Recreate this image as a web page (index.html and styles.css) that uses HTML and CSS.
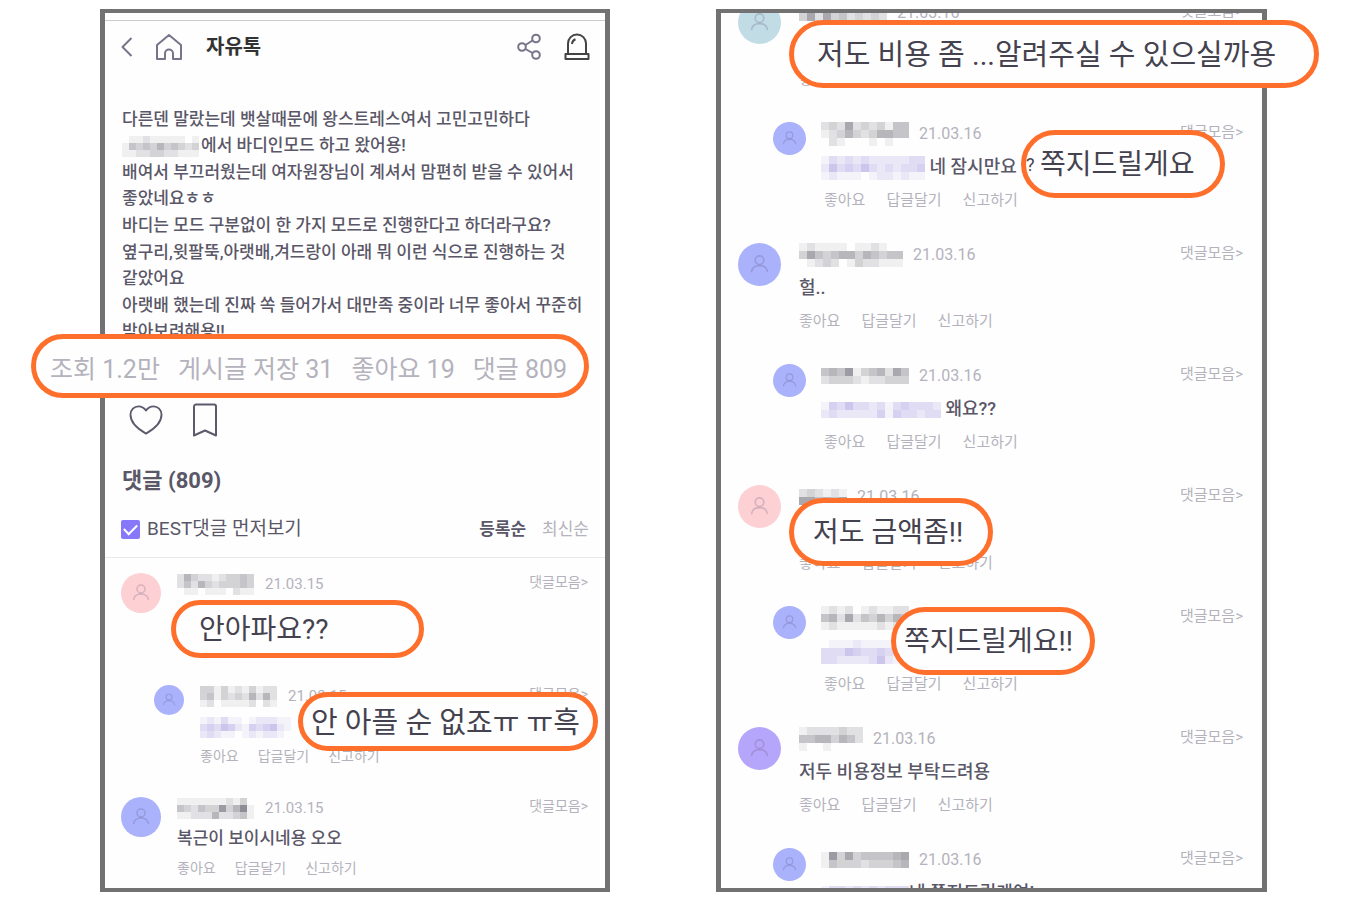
FILE: index.html
```html
<!DOCTYPE html>
<html lang="ko">
<head>
  <meta charset="UTF-8">
  <meta name="viewport" content="width=device-width, initial-scale=1.0">
  <title>자유톡</title>
  <link rel="stylesheet" href="styles.css">
</head>
<body>
  <svg class="defs" aria-hidden="true">
    <symbol id="person" viewBox="0 0 40 40">
      <circle cx="20" cy="16" r="4"/>
      <path d="M12.500 27c.6-4.200 3.500-6 7.500-6s6.900 1.800 7.500 6"/>
    </symbol>
  </svg>
  <main class="shots">
    <section class="shot shot-post">
      <div class="screen">
        <header class="topbar">
          <button class="icon-btn" aria-label="뒤로"><svg width="12" height="20" viewBox="0 0 12 20"><path d="M10.500 1 1.500 10l9 9"/></svg></button>
          <button class="icon-btn home" aria-label="홈"><svg width="28" height="28" viewBox="0 0 28 28"><path d="M2 12 14 2l12 10v14h-8v-5.500a4 4 0 0 0-8 0V26H2z"/></svg></button>
          <h1>자유톡</h1>
          <button class="icon-btn share" aria-label="공유"><svg width="24" height="28" viewBox="0 0 24 28"><circle cx="5" cy="14" r="3.800"/><circle cx="19" cy="5.500" r="3.800"/><circle cx="19" cy="22" r="3.800"/><path d="M8.500 12 15.500 7.500M8.500 16l7 4"/></svg></button>
          <button class="icon-btn siren" aria-label="신고"><svg width="26" height="28" viewBox="0 0 26 28"><path d="M4 21V10.500a9 9 0 0 1 18 0V21M1.500 21h23v5h-23zM8 11c.2-2.500 1.500-4 3.500-4.700"/></svg></button>
        </header>

        <article class="post">
          <p>다른덴 말랐는데 뱃살때문에 왕스트레스여서 고민고민하다<br><span class="mosaic" data-rows="01121111101|14343534323|11223322111"></span>에서 바디인모드 하고 왔어용!</p>
          <p>배여서 부끄러웠는데 여자원장님이 계셔서 맘편히 받을 수 있어서<br>좋았네요ㅎㅎ</p>
          <p>바디는 모드 구분없이 한 가지 모드로 진행한다고 하더라구요?</p>
          <p>옆구리,윗팔뚝,아랫배,겨드랑이 아래 뭐 이런 식으로 진행하는 것<br>같았어요</p>
          <p>아랫배 했는데 진짜 쏙 들어가서 대만족 중이라 너무 좋아서 꾸준히<br>받아보려해용!!</p>
        </article>

        <div class="reactions">
          <button class="icon-btn" aria-label="좋아요"><svg width="34" height="32" viewBox="0 0 36 34"><path d="M18 31.500C10 27 1.500 20 1.500 11.500 1.500 6 5.500 2.500 10 2.500c3.500 0 6 1.500 8 4.500 2-3 4.500-4.500 8-4.500 4.500 0 8.500 3.500 8.500 9C34.500 20 26 27 18 31.500z"/></svg></button>
          <button class="icon-btn" aria-label="저장"><svg width="26" height="34" viewBox="0 0 26 34"><path d="M2 32.500V3.500a2 2 0 0 1 2-2h18a2 2 0 0 1 2 2v29L13 27.500z"/></svg></button>
        </div>

        <h2>댓글 (809)</h2>
        <div class="filter">
          <label><input type="checkbox" checked>BEST댓글 먼저보기</label>
          <button class="sort active">등록순</button>
          <button class="sort">최신순</button>
        </div>

        <div class="comments">
          <div class="comment">
            <svg class="avatar pink"><use href="#person"/></svg>
            <div class="content">
              <div class="meta"><span class="mosaic" data-rows="25322123343|24253233343|01101110211"></span><time>21.03.15</time><a class="more" href="#">댓글모음&gt;</a></div>
            </div>
          </div>
          <div class="comment reply">
            <svg class="avatar blue"><use href="#person"/></svg>
            <div class="content">
              <div class="meta"><span class="mosaic" data-rows="33131213122|34132325252|12011112021"></span><time>21.03.15</time><a class="more" href="#">댓글모음&gt;</a></div>
              <p><span class="mosaic mention" data-rows="12131101222110|34354214345210|23211012122100"></span></p>
              <div class="actions"><button>좋아요</button><button>답글달기</button><button>신고하기</button></div>
            </div>
          </div>
          <div class="comment">
            <svg class="avatar blue"><use href="#person"/></svg>
            <div class="content">
              <div class="meta"><span class="mosaic" data-rows="11111112130|43243373581|11222522341"></span><time>21.03.15</time><a class="more" href="#">댓글모음&gt;</a></div>
              <p>복근이 보이시네용 오오</p>
              <div class="actions"><button>좋아요</button><button>답글달기</button><button>신고하기</button></div>
            </div>
          </div>
        </div>
      </div>

      <div class="callout stats"><span>조회 1.2만</span><span>게시글 저장 31</span><span>좋아요 19</span><span>댓글 809</span></div>
      <div class="callout no-pain">안아파요??</div>
      <div class="callout some-pain">안 아플 순 없죠ㅠ ㅠ흑</div>
    </section>

    <section class="shot shot-thread">
      <div class="screen">
        <div class="comments">
          <div class="comment">
            <svg class="avatar teal"><use href="#person"/></svg>
            <div class="content">
              <div class="meta"><span class="mosaic" data-rows="12112111211|36263423232"></span><time>21.03.16</time><a class="more" href="#">댓글모음&gt;</a></div>
              <p></p>
              <div class="actions"><button>좋아요</button></div>
            </div>
          </div>
          <div class="comment reply">
            <svg class="avatar blue"><use href="#person"/></svg>
            <div class="content">
              <div class="meta"><span class="mosaic" data-rows="23262323144|12353235544|02100010100"></span><time>21.03.16</time><a class="more" href="#">댓글모음&gt;</a></div>
              <p><span class="mosaic mention" data-rows="1323232222233|2534353232334|1211101221211"></span> 네 잠시만요</p>
              <div class="actions"><button>좋아요</button><button>답글달기</button><button>신고하기</button></div>
            </div>
          </div>
          <div class="comment">
            <svg class="avatar blue"><use href="#person"/></svg>
            <div class="content">
              <div class="meta"><span class="mosaic" data-rows="1211110112100|3643455354344|0123201322111"></span><time>21.03.16</time><a class="more" href="#">댓글모음&gt;</a></div>
              <p>헐..</p>
              <div class="actions"><button>좋아요</button><button>답글달기</button><button>신고하기</button></div>
            </div>
          </div>
          <div class="comment reply">
            <svg class="avatar blue"><use href="#person"/></svg>
            <div class="content">
              <div class="meta"><span class="mosaic" data-rows="45471345264|23332122333"></span><time>21.03.16</time><a class="more" href="#">댓글모음&gt;</a></div>
              <p><span class="mosaic mention" data-rows="143533231343332|232222241433233"></span> 왜요??</p>
              <div class="actions"><button>좋아요</button><button>답글달기</button><button>신고하기</button></div>
            </div>
          </div>
          <div class="comment">
            <svg class="avatar pink"><use href="#person"/></svg>
            <div class="content">
              <div class="meta"><span class="mosaic" data-rows="232121|664546"></span><time>21.03.16</time><a class="more" href="#">댓글모음&gt;</a></div>
              <p></p>
              <div class="actions"><button>좋아요</button><button>답글달기</button><button>신고하기</button></div>
            </div>
          </div>
          <div class="comment reply">
            <svg class="avatar blue"><use href="#person"/></svg>
            <div class="content">
              <div class="meta"><span class="mosaic" data-rows="12120121122|45262435354|12111112121"></span><a class="more" href="#">댓글모음&gt;</a></div>
              <p><span class="mosaic mention" data-rows="0111211110|3335433432|3322223521"></span></p>
              <div class="actions"><button>좋아요</button><button>답글달기</button><button>신고하기</button></div>
            </div>
          </div>
          <div class="comment">
            <svg class="avatar purple"><use href="#person"/></svg>
            <div class="content">
              <div class="meta"><span class="mosaic" data-rows="12222322|44553542|10010000"></span><time>21.03.16</time><a class="more" href="#">댓글모음&gt;</a></div>
              <p>저두 비용정보 부탁드려용</p>
              <div class="actions"><button>좋아요</button><button>답글달기</button><button>신고하기</button></div>
            </div>
          </div>
          <div class="comment reply">
            <svg class="avatar blue"><use href="#person"/></svg>
            <div class="content">
              <div class="meta"><span class="mosaic" data-rows="17363444456|14333233345"></span><time>21.03.16</time><a class="more" href="#">댓글모음&gt;</a></div>
              <p><span class="mosaic mention" data-rows="13323232333|13323232333"></span>네 쪽지드릴게여!</p>
            </div>
          </div>
        </div>
      </div>

      <div class="callout ask-cost">저도 비용 좀 ...알려주실 수 있으실까용</div>
      <div class="callout send-note"><small>?</small>쪽지드릴게요</div>
      <div class="callout ask-price">저도 금액좀!!</div>
      <div class="callout send-note-again">쪽지드릴게요!!</div>
    </section>
  </main>
  <script src="mosaic.js"></script>
</body>
</html>
```

FILE: styles.css
```css
* { box-sizing: border-box; }
body { margin: 0; background: #fff; color: #5a5768; font-family: Roboto, "Noto Sans CJK KR", sans-serif; }
h1, h2, p { margin: 0; }
button { border: 0; padding: 0; background: none; font: inherit; color: inherit; cursor: pointer; }
a { color: inherit; text-decoration: none; }
.defs { position: absolute; width: 0; height: 0; }

.shots { display: grid; grid-template-columns: 510fr 551fr; gap: 106px; height: 100vh; min-height: 600px; padding: 9px 83px 8px 100px; }
.shot { position: relative; min-width: 0; min-height: 0; }
.screen { height: 100%; overflow: hidden; border: 5px solid #727272; border-width: 4px 5px; background: #fefefe; }

/* top bar */
.topbar { display: flex; align-items: center; height: 53px; margin-top: 7px; padding: 0 15px 0 16px; border-top: 1px solid #ccc; }
.icon-btn { display: flex; }
.icon-btn svg { fill: none; stroke: #77748a; stroke-width: 2; stroke-linejoin: round; }
.home { margin-left: 22px; }
.topbar h1 { margin: 0 auto 0 23px; color: #333; font-size: 20px; font-weight: 700; line-height: 28px; }
.siren { margin-left: 23px; }
.siren svg { stroke: #444; }

/* post */
.post { padding: 33px 17px 0; font-size: 17px; font-weight: 500; line-height: 26px; white-space: nowrap; }
.post p + p { margin-top: 1px; }
.post .mosaic { margin-right: 2px; }
.reactions { display: flex; align-items: center; gap: 29px; margin-top: 59px; padding: 0 24px; }
.reactions svg { stroke: #5d5a6c; }
h2 { margin-top: 30px; padding: 0 17px; font-size: 22px; font-weight: 700; line-height: 28px; }
.filter { display: flex; align-items: center; gap: 16px; margin-top: 22px; padding: 0 16px 16px; border-bottom: 1px solid #e9e9ec; font-size: 17px; line-height: 24px; }
.filter label { display: flex; align-items: center; gap: 7px; margin-right: auto; font-size: 19px; }
.filter input { appearance: none; display: grid; place-items: center; width: 19px; height: 19px; margin: 0; border-radius: 2px; background: #8778fa; }
.filter input:checked::after { content: ""; width: 11px; height: 6px; margin-bottom: 3px; border: solid #fff; border-width: 0 0 2px 2px; rotate: -45deg; }
.sort { color: #b4b2bc; }
.sort.active { color: #5a5768; font-weight: 700; }

/* comments */
.comment { display: flex; }
.avatar { flex: none; border-radius: 50%; fill: none; stroke: rgba(90, 80, 120, 0.24); stroke-width: 1.500; }
.pink { background: #fdd0d3; }
.blue { background: #a9b2fb; }
.teal { background: #c2dce5; }
.purple { background: #b6a6fb; }
.content { flex: 1; min-width: 0; display: flex; flex-direction: column; white-space: nowrap; }
.comment p { font-weight: 500; }
.meta { display: flex; align-items: center; color: #b4b2bc; }
.more { margin-left: auto; padding-bottom: 4px; }
.actions { display: flex; color: #b4b2bc; }
.mosaic { display: inline-block; vertical-align: middle; color: #55525f; }
.mosaic.mention { color: #8678d4; }
.mosaic svg { display: block; fill: currentColor; shape-rendering: crispEdges; }

.shot-post .comments { padding: 15px 17px 0 16px; font-size: 17px; line-height: 22px; }
.shot-post .comment { gap: 16px; height: 112px; }
.shot-post .reply { padding-left: 33px; }
.shot-post .avatar { width: 40px; height: 40px; }
.shot-post .reply .avatar { width: 30px; height: 30px; }
.shot-post .content { gap: 8px; }
.shot-post .meta { gap: 11px; height: 22px; font-size: 15px; }
.shot-post .more { font-size: 14px; }
.shot-post .comment p { height: 22px; }
.shot-post .actions { gap: 19px; font-size: 14px; }

.shot-thread .comments { margin-top: -12px; padding: 0 19px 0 17px; font-size: 18px; line-height: 24px; }
.shot-thread .comment { gap: 18px; height: 121px; }
.shot-thread .reply { padding-left: 35px; }
.shot-thread .avatar { width: 43px; height: 43px; }
.shot-thread .reply .avatar { width: 33px; height: 33px; }
.shot-thread .content { gap: 9px; }
.shot-thread .meta { gap: 10px; height: 24px; font-size: 16px; }
.shot-thread .more { font-size: 15px; }
.shot-thread .comment p { height: 24px; }
.shot-thread .actions { gap: 21px; font-size: 15px; }
.shot-thread .reply .mosaic { margin-left: -3px; }

/* enlarged quotes lying over the screens */
.callout { position: absolute; display: flex; align-items: center; height: 68px; padding-top: 2px; border: 5px solid #ff6f2c; border-radius: 34px; background: #fefefe; color: #45424f; font-size: 28px; line-height: 40px; white-space: nowrap; }
.stats { top: 325px; left: -69px; width: 558px; height: 64px; padding: 8px 0 0 14px; gap: 18px; color: #b4b2bc; font-size: 25px; }
.no-pain { top: 591px; left: 71px; width: 253px; height: 58px; padding-left: 23px; }
.some-pain { top: 683px; left: 198px; width: 300px; height: 59px; padding-left: 8px; font-size: 29px; }
.ask-cost { top: 11px; left: 73px; width: 530px; padding-left: 23px; font-size: 29px; }
.send-note { top: 121px; left: 305px; width: 204px; }
.send-note small { width: 14px; font-size: 18px; }
.ask-price { top: 489px; left: 73px; width: 204px; padding-left: 19px; }
.send-note-again { top: 598px; left: 175px; width: 204px; padding-left: 8px; }
```

FILE: mosaic.js
```js
// Hides names behind a mosaic: each digit in data-rows is the darkness of one cell.
document.querySelectorAll('.mosaic').forEach(el => {
  const cell = el.closest('.shot-post') ? 7 : 8;
  const rows = el.dataset.rows.split('|');
  const cols = rows[0].length;
  let rects = '';
  rows.forEach((row, y) => {
    [...row].forEach((level, x) => {
      rects += `<rect x="${x * cell}" y="${y * cell}" width="${cell}" height="${cell}" opacity="${level / 12}"/>`;
    });
  });
  el.innerHTML = `<svg width="${cols * cell}" height="${rows.length * cell}">${rects}</svg>`;
});
```
